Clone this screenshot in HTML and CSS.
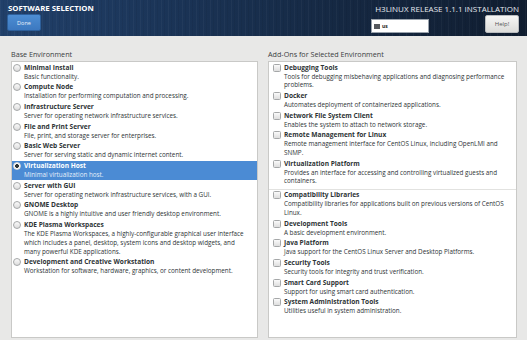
FILE: index.html
```html
<!DOCTYPE html>
<html>
<head>
<meta charset="utf-8">
<link rel="stylesheet" href="styles.css">
</head>
<body>
<header class="topbar">
  <div class="tb-left">
    <div class="tb-title">SOFTWARE SELECTION</div>
    <button class="btn-done">Done</button>
  </div>
  <div class="tb-right">
    <div class="tb-product">H3LINUX RELEASE 1.1.1 INSTALLATION</div>
    <div class="tb-row">
      <div class="lang"><span class="kbd"></span><span>us</span></div>
      <button class="btn-help">Help!</button>
    </div>
  </div>
</header>
<main class="content">
  <section class="col">
    <div class="col-label">Base Environment</div>
    <div class="list">
      <div class="item"><span class="radio"></span><div class="txt"><div class="t">Minimal Install</div><div class="d">Basic functionality.</div></div></div>
      <div class="item"><span class="radio"></span><div class="txt"><div class="t">Compute Node</div><div class="d">Installation for performing computation and processing.</div></div></div>
      <div class="item"><span class="radio"></span><div class="txt"><div class="t">Infrastructure Server</div><div class="d">Server for operating network infrastructure services.</div></div></div>
      <div class="item"><span class="radio"></span><div class="txt"><div class="t">File and Print Server</div><div class="d">File, print, and storage server for enterprises.</div></div></div>
      <div class="item"><span class="radio"></span><div class="txt"><div class="t">Basic Web Server</div><div class="d">Server for serving static and dynamic internet content.</div></div></div>
      <div class="item sel"><span class="radio on"></span><div class="txt"><div class="t">Virtualization Host</div><div class="d">Minimal virtualization host.</div></div></div>
      <div class="item"><span class="radio"></span><div class="txt"><div class="t">Server with GUI</div><div class="d">Server for operating network infrastructure services, with a GUI.</div></div></div>
      <div class="item"><span class="radio"></span><div class="txt"><div class="t">GNOME Desktop</div><div class="d">GNOME is a highly intuitive and user friendly desktop environment.</div></div></div>
      <div class="item"><span class="radio"></span><div class="txt"><div class="t">KDE Plasma Workspaces</div><div class="d">The KDE Plasma Workspaces, a highly-configurable graphical user interface which includes a panel, desktop, system icons and desktop widgets, and many powerful KDE applications.</div></div></div>
      <div class="item"><span class="radio"></span><div class="txt"><div class="t">Development and Creative Workstation</div><div class="d">Workstation for software, hardware, graphics, or content development.</div></div></div>
    </div>
  </section>
  <section class="col">
    <div class="col-label">Add-Ons for Selected Environment</div>
    <div class="list list-r">
      <div class="item"><span class="check"></span><div class="txt"><div class="t">Debugging Tools</div><div class="d">Tools for debugging misbehaving applications and diagnosing performance problems.</div></div></div>
      <div class="item"><span class="check"></span><div class="txt"><div class="t">Docker</div><div class="d">Automates deployment of containerized applications.</div></div></div>
      <div class="item"><span class="check"></span><div class="txt"><div class="t">Network File System Client</div><div class="d">Enables the system to attach to network storage.</div></div></div>
      <div class="item"><span class="check"></span><div class="txt"><div class="t">Remote Management for Linux</div><div class="d">Remote management interface for CentOS Linux, including OpenLMI and SNMP.</div></div></div>
      <div class="item"><span class="check"></span><div class="txt"><div class="t">Virtualization Platform</div><div class="d">Provides an interface for accessing and controlling virtualized guests and containers.</div></div></div>
      <div class="sep"></div>
      <div class="item"><span class="check"></span><div class="txt"><div class="t">Compatibility Libraries</div><div class="d">Compatibility libraries for applications built on previous versions of CentOS Linux.</div></div></div>
      <div class="item"><span class="check"></span><div class="txt"><div class="t">Development Tools</div><div class="d">A basic development environment.</div></div></div>
      <div class="item"><span class="check"></span><div class="txt"><div class="t">Java Platform</div><div class="d">Java support for the CentOS Linux Server and Desktop Platforms.</div></div></div>
      <div class="item"><span class="check"></span><div class="txt"><div class="t">Security Tools</div><div class="d">Security tools for integrity and trust verification.</div></div></div>
      <div class="item"><span class="check"></span><div class="txt"><div class="t">Smart Card Support</div><div class="d">Support for using smart card authentication.</div></div></div>
      <div class="item"><span class="check"></span><div class="txt"><div class="t">System Administration Tools</div><div class="d">Utilities useful in system administration.</div></div></div>
    </div>
  </section>
</main>
</body>
</html>
```
FILE: styles.css
```css
* { box-sizing: border-box; }
html, body { margin: 0; padding: 0; }
body {
  width: 527px;
  height: 340px;
  overflow: hidden;
  background: #e8e8e7;
  font-family: "Open Sans", "DejaVu Sans", sans-serif;
  color: #2e3436;
}
.topbar {
  height: 36px;
  display: flex;
  justify-content: space-between;
  padding: 3px 8px 0 7px;
  background:
    repeating-linear-gradient(90deg, rgba(255,255,255,0.035) 0 1px, rgba(0,0,0,0) 1px 3px, rgba(0,0,0,0.05) 3px 4px, rgba(0,0,0,0) 4px 7px),
    linear-gradient(90deg, #21406a 0%, #1a3355 35%, #152842 65%, #101d30 100%);
}
.tb-left { display: flex; flex-direction: column; align-items: flex-start; }
.tb-title {
  color: #fff;
  font-weight: bold;
  font-size: 7.8px;
  line-height: 10px;
  margin-left: 1px;
}
.btn-done {
  margin-top: 1px;
  width: 34px;
  height: 17px;
  border: 1px solid #2d5f9a;
  border-radius: 2px;
  background: linear-gradient(#4d8ed3, #3c78c0);
  color: #e8f0fa;
  font-family: "Open Sans", sans-serif;
  font-size: 5.5px;
  padding: 0;
}
.tb-right { display: flex; flex-direction: column; align-items: flex-end; }
.tb-product {
  color: #e6e9ee;
  font-size: 8px;
  line-height: 11px;
}
.tb-row { display: flex; align-items: flex-end; gap: 56px; margin-top: 1px; }
.lang {
  width: 58px;
  height: 14px;
  background: #fff;
  border: 1px solid #9aa3ad;
  display: flex;
  align-items: center;
  gap: 2px;
  padding-left: 2px;
  font-size: 5px;
  color: #222;
  font-weight: bold;
}
.kbd {
  width: 6px;
  height: 5px;
  background: #55595e;
  display: inline-block;
}
.btn-help {
  width: 34px;
  height: 18px;
  border: 1px solid #b9bcbf;
  border-radius: 2px;
  background: linear-gradient(#f6f6f5, #dcdcda);
  color: #555;
  font-family: "Open Sans", sans-serif;
  font-size: 6px;
  padding: 0;
}
.content {
  display: grid;
  grid-template-columns: 247px 249px;
  column-gap: 10px;
  padding: 13px 0 0 11px;
  height: 304px;
}
.col { display: flex; flex-direction: column; }
.col-label {
  font-size: 7.2px;
  line-height: 10px;
  color: #3a3d3f;
  height: 12px;
}
.list {
  flex: 1;
  background: #fff;
  border: 1px solid #c9c9c7;
  margin-bottom: 2px;
}
.list-r .item { padding-left: 4px; }
.item {
  display: flex;
  align-items: flex-start;
  padding: 0.5px 0 0.5px 1px;
}
.item.sel { background: #4b8bd4; color: #fff; }
.item.sel .d { color: #e4eefa; }
.radio {
  flex: none;
  width: 8px;
  height: 8px;
  border-radius: 50%;
  border: 1px solid #a5a7a8;
  background: linear-gradient(#fafafa, #dcdcdc);
  margin-top: 1px;
  margin-right: 3px;
}
.radio.on {
  background: radial-gradient(circle, #2e3436 0 1.7px, #fff 2.2px);
  border-color: #d8d8d8;
}
.check {
  flex: none;
  width: 8px;
  height: 8px;
  border-radius: 1.5px;
  border: 1px solid #a5a7a8;
  background: linear-gradient(#fafafa, #dedede);
  margin-top: 1px;
  margin-right: 3px;
}
.txt { flex: 1; }
.t {
  font-weight: bold;
  font-size: 6.6px;
  line-height: 10px;
}
.d {
  font-size: 6.3px;
  line-height: 8.7px;
  padding-right: 6px;
}
.sep {
  height: 1px;
  background: #e2e2e0;
  margin: 2px 0 0;
}
```
